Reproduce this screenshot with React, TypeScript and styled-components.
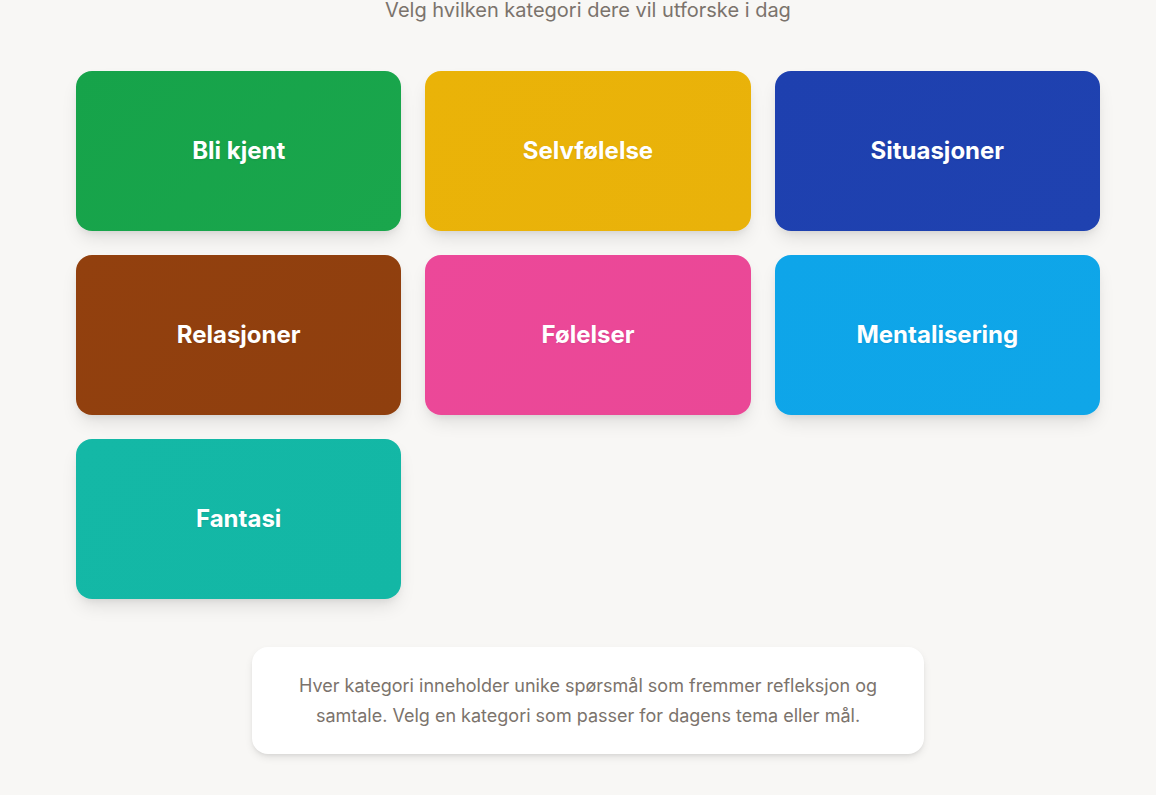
import React from "react";
import styled, { createGlobalStyle } from "styled-components";

const Global = createGlobalStyle`
  html, body { margin: 0; padding: 0; }
  body {
    background: #f8f7f5;
    font-family: Inter, "Noto Sans", sans-serif;
    -webkit-font-smoothing: antialiased;
  }
`;

const Page = styled.main`
  display: flex;
  flex-direction: column;
  align-items: center;
  padding: 0 0 40px 20px;
  min-height: 795px;
  box-sizing: border-box;
`;

const Subtitle = styled.p`
  margin: 0 0 51px;
  font-size: 20px;
  line-height: 20px;
  color: #7b736c;
`;

const Grid = styled.div`
  display: grid;
  grid-template-columns: repeat(3, 1fr);
  gap: 24px;
  width: 1024px;
`;

const Card = styled.button<{ $from: string; $to: string }>`
  height: 160px;
  border: none;
  border-radius: 16px;
  background: linear-gradient(135deg, ${(p) => p.$from}, ${(p) => p.$to});
  box-shadow: 0 10px 18px -3px rgba(0, 0, 0, 0.1), 0 4px 8px -4px rgba(0, 0, 0, 0.1);
  color: #ffffff;
  font-family: Inter, "Noto Sans", sans-serif;
  font-size: 24px;
  font-weight: 700;
  padding: 0 0 2px;
  cursor: pointer;
  display: flex;
  align-items: center;
  justify-content: center;
  text-shadow: 0 1px 2px rgba(0, 0, 0, 0.08);
`;

const Info = styled.div`
  margin-top: 48px;
  width: 672px;
  box-sizing: border-box;
  background: #ffffff;
  border-radius: 16px;
  padding: 24px 32px 23px;
  box-shadow: 0 4px 8px -1px rgba(0, 0, 0, 0.1), 0 2px 4px -2px rgba(0, 0, 0, 0.1);
  text-align: center;
`;

const InfoText = styled.p`
  margin: 0;
  font-size: 18px;
  line-height: 30px;
  color: #7b736c;
`;

const categories = [
  { name: "Bli kjent", from: "#16a34a", to: "#1aa64c" },
  { name: "Selvfølelse", from: "#eab308", to: "#e9b20a" },
  { name: "Situasjoner", from: "#1e40af", to: "#1f42b0" },
  { name: "Relasjoner", from: "#92400e", to: "#8f3f0e" },
  { name: "Følelser", from: "#ec4899", to: "#ea4896" },
  { name: "Mentalisering", from: "#0ea5e9", to: "#0fa6e8" },
  { name: "Fantasi", from: "#14b8a6", to: "#13b7a5" },
];

export default function App() {
  return (
    <>
      <Global />
      <Page>
        <Subtitle>Velg hvilken kategori dere vil utforske i dag</Subtitle>
        <Grid>
          {categories.map((c) => (
            <Card key={c.name} $from={c.from} $to={c.to}>
              {c.name}
            </Card>
          ))}
        </Grid>
        <Info>
          <InfoText>
            Hver kategori inneholder unike spørsmål som fremmer refleksjon og samtale. Velg en
            kategori som passer for dagens tema eller mål.
          </InfoText>
        </Info>
      </Page>
    </>
  );
}
